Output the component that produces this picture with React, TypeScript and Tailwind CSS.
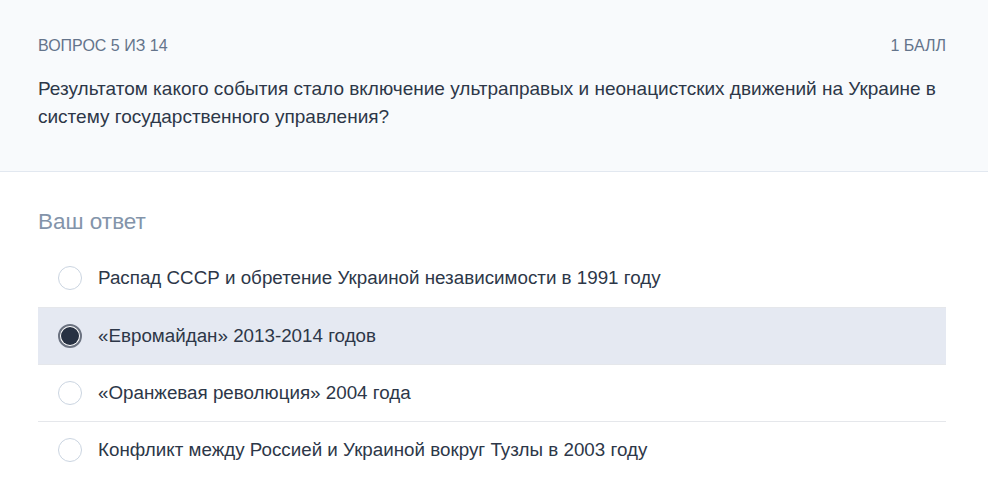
const options = [
  'Распад СССР и обретение Украиной независимости в 1991 году',
  '«Евромайдан» 2013-2014 годов',
  '«Оранжевая революция» 2004 года',
  'Конфликт между Россией и Украиной вокруг Тузлы в 2003 году',
];

function Radio({ checked }: { checked: boolean }) {
  if (checked) {
    return (
      <span className="flex h-6 w-6 shrink-0 items-center justify-center rounded-full border-2 border-[#6b7280] bg-white">
        <span className="h-[18px] w-[18px] rounded-full bg-[#273142]" />
      </span>
    );
  }
  return <span className="h-6 w-6 shrink-0 rounded-full border border-[#cbd5e1] bg-white" />;
}

export default function App() {
  const selected = 1;
  return (
    <div className="min-h-[477px] w-full bg-white font-['Liberation_Sans',Arial,sans-serif] text-[#2d3748]">
      <div className="border-b border-[#e2e8f0] bg-[#f8fafc] px-[38px] pt-[34px] pb-[40px]">
        <div className="flex items-center justify-between text-[16px] uppercase text-[#64748b]">
          <span>Вопрос 5 из 14</span>
          <span className="mr-[4px]">1 балл</span>
        </div>
        <p className="mt-[17px] text-[19px] leading-[28px] text-[#2d3748]">
          Результатом какого события стало включение ультраправых и неонацистских движений на Украине в
          систему государственного управления?
        </p>
      </div>
      <div className="px-[38px] pt-[33px]">
        <h2 className="text-[22.5px] text-[#8394aa]">Ваш ответ</h2>
        <div className="mt-[11px] mr-[4px]">
          {options.map((o, i) => (
            <div
              key={o}
              className={
                'flex h-[57px] items-center gap-[16px] px-[20px] text-[18.8px] ' +
                (i === selected ? 'bg-[#e5e9f2] ' : '') +
                (i > 0 ? 'border-t border-[#e5e7eb]' : '')
              }
            >
              <Radio checked={i === selected} />
              <span>{o}</span>
            </div>
          ))}
        </div>
      </div>
    </div>
  );
}
